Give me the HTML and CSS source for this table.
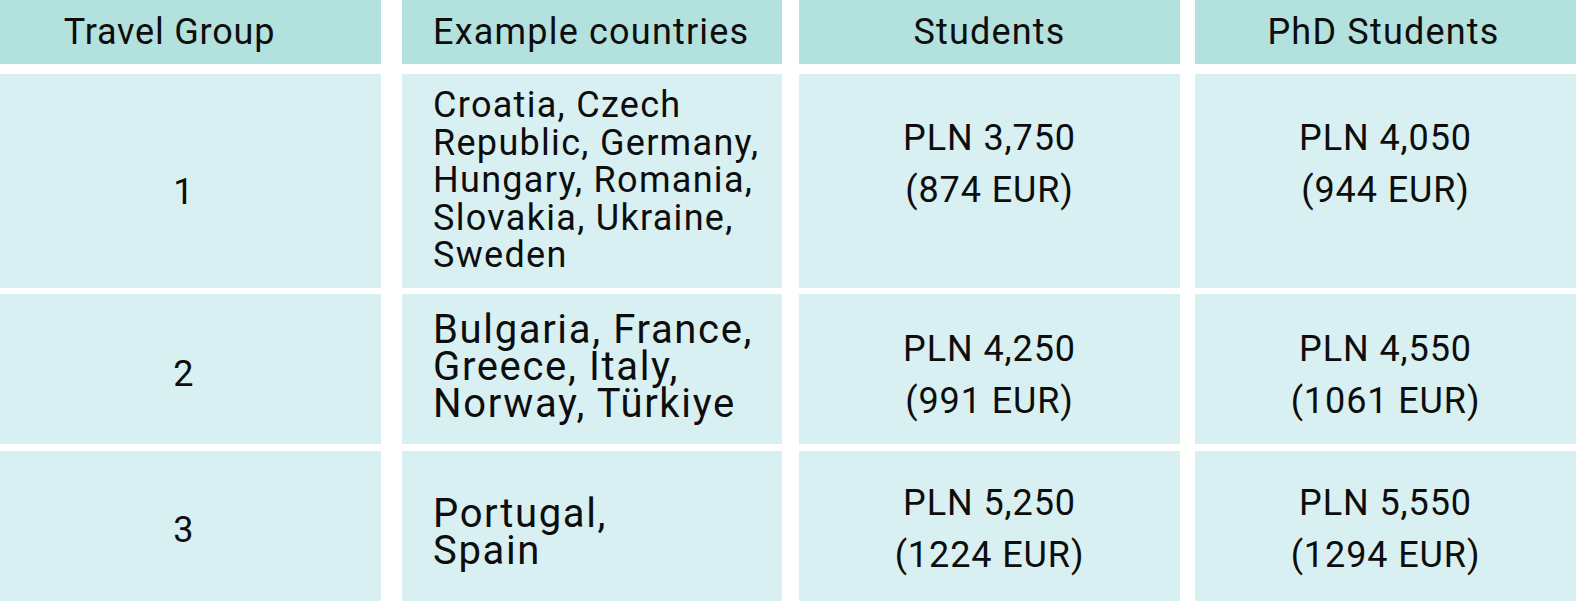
FILE: index.html
```html
<!DOCTYPE html>
<html lang="en">
<head>
<meta charset="utf-8">
<title>Travel Groups</title>
<link rel="stylesheet" href="styles.css">
</head>
<body>
<div class="table">
  <div class="row head">
    <div class="cell c1">Travel Group</div>
    <div class="cell c2">Example countries</div>
    <div class="cell c3">Students</div>
    <div class="cell c4">PhD Students</div>
  </div>
  <div class="row r1">
    <div class="cell c1 num">1</div>
    <div class="cell c2 countries">Croatia, Czech<br>Republic, Germany,<br>Hungary, Romania,<br>Slovakia, Ukraine,<br>Sweden</div>
    <div class="cell c3 money"><span>PLN 3,750</span><span>(874 EUR)</span></div>
    <div class="cell c4 money"><span>PLN 4,050</span><span>(944 EUR)</span></div>
  </div>
  <div class="row r2">
    <div class="cell c1 num">2</div>
    <div class="cell c2 countries large">Bulgaria, France,<br>Greece, Italy,<br>Norway, Türkiye</div>
    <div class="cell c3 money"><span>PLN 4,250</span><span>(991 EUR)</span></div>
    <div class="cell c4 money"><span>PLN 4,550</span><span>(1061 EUR)</span></div>
  </div>
  <div class="row r3">
    <div class="cell c1 num">3</div>
    <div class="cell c2 countries large">Portugal,<br>Spain</div>
    <div class="cell c3 money"><span>PLN 5,250</span><span>(1224 EUR)</span></div>
    <div class="cell c4 money"><span>PLN 5,550</span><span>(1294 EUR)</span></div>
  </div>
</div>
</body>
</html>
```

FILE: styles.css
```css
html, body {
  margin: 0;
  padding: 0;
  background: #ffffff;
}
body {
  width: 1576px;
  height: 601px;
  overflow: hidden;
  font-family: Roboto, "Liberation Sans", sans-serif;
  color: #0d0d0d;
}
.table {
  display: flex;
  flex-direction: column;
}
.row {
  display: flex;
}
.head { height: 64px; margin-bottom: 10px; }
.r1 { height: 214px; margin-bottom: 6px; }
.r2 { height: 150px; margin-bottom: 7px; }
.r3 { height: 150px; }

.cell {
  box-sizing: border-box;
  background: #d8f0f2;
  display: flex;
  align-items: center;
  font-size: 36px;
  letter-spacing: 0.4px;
}
.head .cell {
  background: #b3e1de;
  justify-content: center;
  letter-spacing: 1.2px;
}
.c1 { width: 381px; margin-right: 21px; }
.c2 { width: 380px; margin-right: 17px; }
.c3 { width: 381px; margin-right: 15px; }
.c4 { width: 381px; }

.head .c1 { padding-right: 42px; letter-spacing: 0.8px; }
.head .c2 { justify-content: flex-start; padding-left: 31px; }
.head .c3 { padding-right: 0; }
.head .c4 { padding-right: 4px; }

.num {
  justify-content: center;
  padding-right: 14px;
}
.r1 .num { padding-top: 22px; }
.r2 .num { padding-top: 10px; }
.r3 .num { padding-top: 8px; }

.countries {
  padding-left: 31px;
  line-height: 37.5px;
  font-size: 36px;
  letter-spacing: 1.3px;
}
.countries.large {
  font-size: 40px;
  line-height: 37px;
  letter-spacing: 1.65px;
}
.r2 .countries { padding-bottom: 6px; }
.r3 .countries { padding-top: 11px; }

.money {
  flex-direction: column;
  justify-content: center;
  align-items: center;
  line-height: 52px;
  letter-spacing: 0.9px;
}
.c3.money { padding-right: 0; }
.c4.money { padding-right: 0; }
.r1 .money { padding-bottom: 34px; }
.r2 .money { padding-top: 12px; }
.r3 .money { padding-top: 6px; }
```
